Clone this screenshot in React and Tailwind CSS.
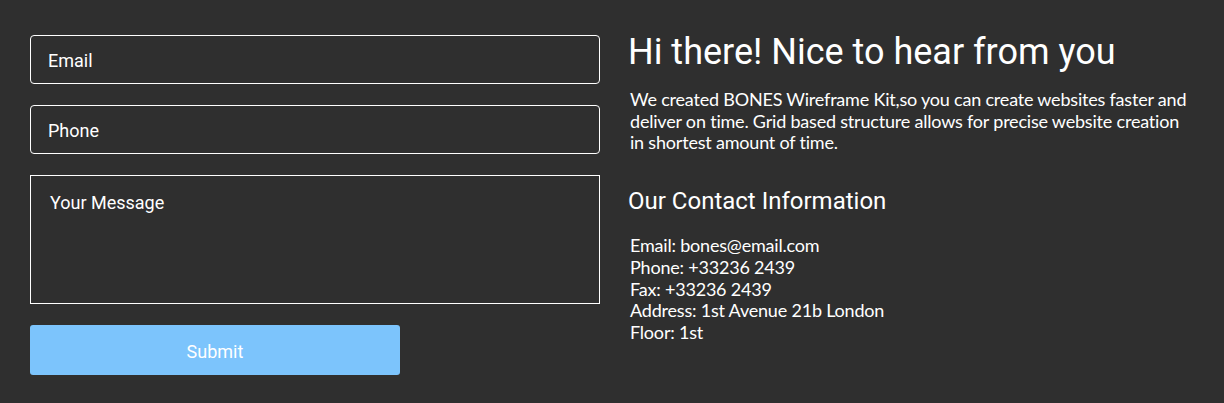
import React from "react";

const ContactSection = () => {
  return (
    <div className="min-h-screen bg-[#2f2f2f] text-white">
      <div className="flex gap-[28px] pl-[30px] pt-[35px]">
        {/* Form */}
        <form className="flex flex-col w-[570px] font-['Roboto',sans-serif]">
          <input
            type="text"
            placeholder="Email"
            className="h-[49px] rounded-[4px] border border-white bg-transparent px-[17px] pt-[2px] text-[18px] text-white placeholder:text-white outline-none"
          />
          <input
            type="text"
            placeholder="Phone"
            className="mt-[21px] h-[49px] rounded-[4px] border border-white bg-transparent px-[17px] pt-[2px] text-[18px] text-white placeholder:text-white outline-none"
          />
          <textarea
            placeholder="Your Message"
            className="mt-[21px] h-[129px] resize-none border border-white bg-transparent px-[19px] pt-[13px] text-[18px] text-white placeholder:text-white outline-none"
          />
          <button
            type="button"
            className="mt-[21px] h-[50px] w-[370px] rounded-[3px] bg-[#7cc4fc] pt-[2px] text-[18px] text-white"
          >
            Submit
          </button>
        </form>

        {/* Info */}
        <div className="flex flex-col w-[570px]">
          <h1 className="font-['Roboto',sans-serif] text-[36px] leading-[42px] -mt-[4px]">
            Hi there! Nice to hear from you
          </h1>
          <p className="mt-[16px] pl-[2px] w-[562px] font-['Lato',sans-serif] text-[18px] leading-[21.7px] tracking-[-0.2px]">
            We created BONES Wireframe Kit,so you can create websites faster and
            deliver on time. Grid based structure allows for precise website
            creation in shortest amount of time.
          </p>
          <h2 className="mt-[32px] font-['Roboto',sans-serif] text-[24px] leading-[30px]">
            Our Contact Information
          </h2>
          <div className="mt-[19px] pl-[2px] font-['Lato',sans-serif] text-[18px] leading-[21.7px] tracking-[-0.2px]">
            <div>Email: bones@email.com</div>
            <div>Phone: +33236 2439</div>
            <div>Fax: +33236 2439</div>
            <div>Address: 1st Avenue 21b London</div>
            <div>Floor: 1st</div>
          </div>
        </div>
      </div>
    </div>
  );
};

export default ContactSection;
